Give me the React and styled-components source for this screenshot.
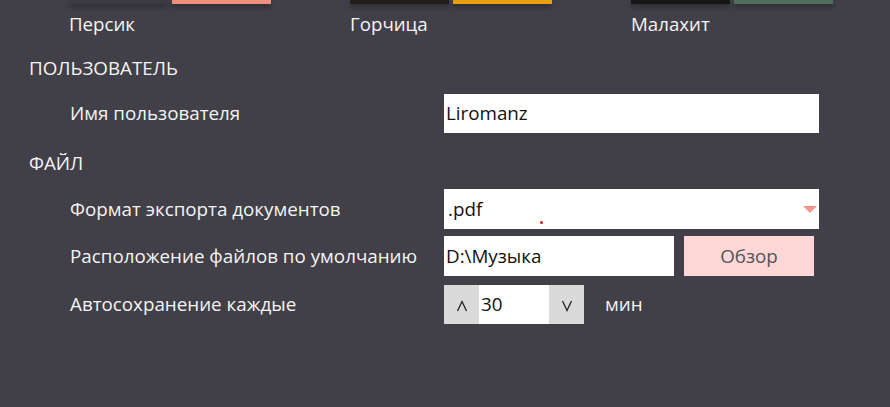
import React from "react"
import styled, { createGlobalStyle } from "styled-components"

const GlobalStyle = createGlobalStyle`
  html, body {
    margin: 0;
    padding: 0;
    background: #413f48;
  }
  body {
    font-family: "Open Sans", "Noto Sans", sans-serif;
    color: #f4f4f4;
  }
`

const Page = styled.div`
  width: 890px;
  height: 407px;
  overflow: hidden;
  background: #413f48;
  padding-left: 29px;
  box-sizing: border-box;
`

const Themes = styled.div`
  display: flex;
  padding-left: 40px;
  gap: 79px;
`

const Theme = styled.div`
  display: flex;
  flex-direction: column;
  width: 202px;
`

const Swatches = styled.div`
  display: flex;
  gap: 4px;
`

const Swatch = styled.div`
  flex: 1;
  height: 4px;
  background: ${(p) => p.color};
  box-shadow: 0 3px 5px rgba(0, 0, 0, 0.35);
`

const ThemeName = styled.div`
  font-size: 18.7px;
  line-height: 24px;
  margin-top: 8px;
`

const Section = styled.div`
  font-size: 18.8px;
  line-height: 24px;
  margin-top: ${(p) => p.top}px;
`

const Row = styled.div`
  display: flex;
  align-items: center;
  height: 40px;
  margin-top: ${(p) => p.top || 0}px;
`

const Label = styled.div`
  width: 374px;
  padding-left: 41px;
  font-size: 18.8px;
`

const Field = styled.div`
  width: ${(p) => p.w}px;
  height: ${(p) => p.h || 40}px;
  background: #fff;
  color: #111;
  font-size: 18.8px;
  display: flex;
  align-items: center;
  padding-left: ${(p) => p.pad || 2}px;
  box-sizing: border-box;
  position: relative;
`

const Arrow = styled.div`
  position: absolute;
  right: 2px;
  top: 17px;
  width: 0;
  height: 0;
  border-left: 7px solid transparent;
  border-right: 7px solid transparent;
  border-top: 7px solid #f2958a;
`

const Dot = styled.div`
  position: absolute;
  left: 96px;
  top: 32px;
  width: 3px;
  height: 3px;
  border-radius: 50%;
  background: #e01818;
`

const Browse = styled.button`
  margin-left: 10px;
  width: 130px;
  height: 40px;
  border: none;
  background: #ffd7d7;
  color: #555;
  font-family: inherit;
  font-size: 18.8px;
  padding: 0;
`

const Stepper = styled.div`
  display: flex;
  height: 39px;
`

const StepButton = styled.div`
  width: 35px;
  background: #dadada;
  color: #222;
  display: flex;
  align-items: center;
  justify-content: center;
  padding-top: 4px;
  box-sizing: border-box;
`

const StepValue = styled.div`
  width: 70px;
  background: #fff;
  color: #111;
  font-size: 18.8px;
  display: flex;
  align-items: center;
  padding-left: 2px;
  box-sizing: border-box;
`

const Unit = styled.div`
  margin-left: 21px;
  font-size: 18.8px;
`

const Chevron = ({ up }) => (
  <svg width="12" height="12" viewBox="0 0 12 12">
    <path
      d={up ? "M1.5 11 L6 1.5 L10.5 11" : "M1.5 1 L6 10.5 L10.5 1"}
      fill="none"
      stroke="#222"
      strokeWidth="1.3"
    />
  </svg>
)

const themes = [
  { name: "Персик", dark: "#3b3942", accent: "#f0907c" },
  { name: "Горчица", dark: "#221c1a", accent: "#e8a010" },
  { name: "Малахит", dark: "#141618", accent: "#4f6e5c" },
]

export default function App() {
  return (
    <Page>
      <GlobalStyle />
      <Themes>
        {themes.map((t) => (
          <Theme key={t.name}>
            <Swatches>
              <Swatch color={t.dark} />
              <Swatch color={t.accent} />
            </Swatches>
            <ThemeName>{t.name}</ThemeName>
          </Theme>
        ))}
      </Themes>
      <Section top={20}>ПОЛЬЗОВАТЕЛЬ</Section>
      <Row top={13}>
        <Label>Имя пользователя</Label>
        <Field w={375} h={39}>Liromanz</Field>
      </Row>
      <Section top={18}>ФАЙЛ</Section>
      <Row top={14}>
        <Label>Формат экспорта документов</Label>
        <Field w={375} pad={4}>
          .pdf
          <Arrow />
          <Dot />
        </Field>
      </Row>
      <Row top={7}>
        <Label>Расположение файлов по умолчанию</Label>
        <Field w={230}>D:\Музыка</Field>
        <Browse>Обзор</Browse>
      </Row>
      <Row top={8}>
        <Label>Автосохранение каждые</Label>
        <Stepper>
          <StepButton>
            <Chevron up />
          </StepButton>
          <StepValue>30</StepValue>
          <StepButton>
            <Chevron />
          </StepButton>
        </Stepper>
        <Unit>мин</Unit>
      </Row>
    </Page>
  )
}
